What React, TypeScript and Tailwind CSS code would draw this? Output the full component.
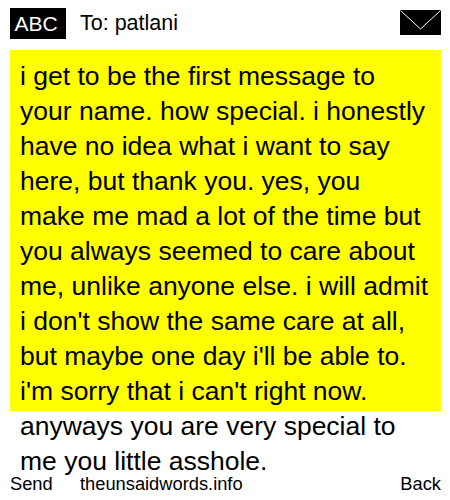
function EnvelopeIcon() {
  return (
    <svg width="41" height="25" viewBox="0 0 41 25" className="block" aria-hidden="true">
      <rect width="41" height="25" fill="#000" />
      <path d="M0.5 0.5 L20.5 19 L40.5 0.5" fill="none" stroke="#fff" strokeWidth="1" />
    </svg>
  )
}

const message =
  "i get to be the first message to your name. how special. i honestly have no idea what i want to say here, but thank you. yes, you make me mad a lot of the time but you always seemed to care about me, unlike anyone else. i will admit i don't show the same care at all, but maybe one day i'll be able to. i'm sorry that i can't right now. anyways you are very special to me you little asshole."

export default function App() {
  return (
    <div className="flex h-[500px] w-[450px] flex-col overflow-hidden bg-white px-[10px] font-['Liberation_Sans',Arial,sans-serif] text-black">
      <header className="flex h-[50px] shrink-0 items-start pt-2">
        <div className="flex h-[31px] w-14 items-center justify-center bg-black pr-1 text-[21px] text-white">ABC</div>
        <div className="ml-[14px] flex h-[31px] items-center text-[21.5px]">To: patlani</div>
        <div className="ml-auto mr-[-1px] pt-[2px]">
          <EnvelopeIcon />
        </div>
      </header>
      <main className="h-[361px] w-[431px] shrink-0 bg-[#ffff00] px-[10px] pt-[9px] text-[26.5px] leading-[35px]">
        <p>{message}</p>
      </main>
      <footer className="mt-auto flex h-[28px] w-[431px] shrink-0 items-end pb-[6px] text-[18.3px] leading-[20px]">
        <span className="w-[70px]">Send</span>
        <span>theunsaidwords.info</span>
        <span className="ml-auto">Back</span>
      </footer>
    </div>
  )
}
